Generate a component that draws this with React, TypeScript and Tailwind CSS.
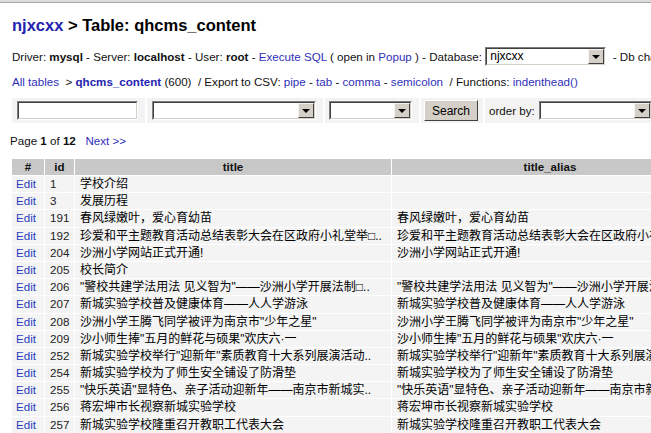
import React from "react";

const rows: [string, string, string][] = [
  ["1", "学校介绍", ""],
  ["3", "发展历程", ""],
  ["191", "春风绿嫩叶，爱心育幼苗", "春风绿嫩叶，爱心育幼苗"],
  ["192", "珍爱和平主题教育活动总结表彰大会在区政府小礼堂举□..", "珍爱和平主题教育活动总结表彰大会在区政府小礼堂举行"],
  ["204", "沙洲小学网站正式开通!", "沙洲小学网站正式开通!"],
  ["205", "校长简介", ""],
  ["206", "\"警校共建学法用法 见义智为\"——沙洲小学开展法制□..", "\"警校共建学法用法 见义智为\"——沙洲小学开展法制教育活动"],
  ["207", "新城实验学校普及健康体育——人人学游泳", "新城实验学校普及健康体育——人人学游泳"],
  ["208", "沙洲小学王腾飞同学被评为南京市\"少年之星\"", "沙洲小学王腾飞同学被评为南京市\"少年之星\""],
  ["209", "沙小师生捧\"五月的鲜花与硕果\"欢庆六·一", "沙小师生捧\"五月的鲜花与硕果\"欢庆六·一"],
  ["252", "新城实验学校举行\"迎新年\"素质教育十大系列展演活动..", "新城实验学校举行\"迎新年\"素质教育十大系列展演活动"],
  ["254", "新城实验学校为了师生安全铺设了防滑垫", "新城实验学校为了师生安全铺设了防滑垫"],
  ["255", "\"快乐英语\"显特色、亲子活动迎新年——南京市新城实..", "\"快乐英语\"显特色、亲子活动迎新年——南京市新城实验学校"],
  ["256", "蒋宏坤市长视察新城实验学校", "蒋宏坤市长视察新城实验学校"],
  ["257", "新城实验学校隆重召开教职工代表大会", "新城实验学校隆重召开教职工代表大会"],
];

function Arrow() {
  return (
    <div className="h-full w-[16px] shrink-0 bg-[#d4d0c8] border border-t-[#f4f4f4] border-l-[#f4f4f4] border-b-[#404040] border-r-[#404040] flex items-center justify-center">
      <div className="w-0 h-0 border-l-[4px] border-r-[4px] border-t-[4px] border-l-transparent border-r-transparent border-t-black" />
    </div>
  );
}

function Select({ w, value = "" }: { w: string; value?: string }) {
  return (
    <div className={`${w} h-[19px] shrink-0 border border-t-[#808080] border-l-[#808080] border-b-white border-r-white`}>
      <div className="h-full border border-t-[#404040] border-l-[#404040] border-b-[#d4d0c8] border-r-[#d4d0c8] bg-white flex items-stretch">
        <div className="flex-1 pl-[3px] leading-[15px] text-[12px] text-black overflow-hidden">{value}</div>
        <Arrow />
      </div>
    </div>
  );
}

function Input({ w }: { w: string }) {
  return (
    <div className={`${w} h-[19px] shrink-0 border border-t-[#808080] border-l-[#808080] border-b-white border-r-white`}>
      <div className="h-full border border-t-[#404040] border-l-[#404040] border-b-[#d4d0c8] border-r-[#d4d0c8] bg-white" />
    </div>
  );
}

export default function App() {
  return (
    <div className="w-[651px] h-[433px] overflow-hidden bg-white whitespace-nowrap font-['Liberation_Sans','Noto_Sans_CJK_SC',sans-serif] text-[11.6px] text-[#111]">
      <div className="h-[2px] bg-[#dcdcdc]" />
      <div className="h-[1px] bg-[#a8a8a8]" />

      <div className="mt-[12px] pl-[12px] h-[20px] leading-[20px] text-[16.5px] font-bold text-black">
        <span className="text-[#2323b0]">njxcxx</span> &gt; Table: qhcms_content
      </div>

      <div className="mt-[12px] pl-[12px] h-[19px] flex items-center">
        <span className="shrink-0">
          Driver: <b>mysql</b> - Server: <b>localhost</b> - User: <b>root</b> -{" "}
          <span className="text-[#3030b8]">Execute SQL</span> ( open in{" "}
          <span className="text-[#3030b8]">Popup</span> ) - Database:&nbsp;
        </span>
        <Select w="w-[121px]" value="njxcxx" />
        <span className="shrink-0">&nbsp;&nbsp;- Db charset: utf8</span>
      </div>

      <div className="mt-[8px] pl-[12px] h-[16px] leading-[16px]">
        <span className="text-[#3030b8]">All tables</span> &nbsp;&gt;{" "}
        <b className="text-[#2323b0]">qhcms_content</b> (600) &nbsp;/ Export to CSV:{" "}
        <span className="text-[#3030b8]">pipe</span> - <span className="text-[#3030b8]">tab</span> -{" "}
        <span className="text-[#3030b8]">comma</span> - <span className="text-[#3030b8]">semicolon</span> &nbsp;/ Functions:{" "}
        <span className="text-[#3030b8]">indenthead()</span>
      </div>

      <div className="mt-[8px] ml-[12px] flex gap-[2px] h-[25px]">
        <div className="w-[133px] shrink-0 bg-[#f3f3f3] pl-[5px] pt-[3px]">
          <Input w="w-[121px]" />
        </div>
        <div className="w-[176px] shrink-0 bg-[#f3f3f3] pl-[5px] pt-[3px]">
          <Select w="w-[164px]" />
        </div>
        <div className="w-[94px] shrink-0 bg-[#f3f3f3] pl-[4px] pt-[3px]">
          <Select w="w-[83px]" />
        </div>
        <div className="w-[62px] shrink-0 bg-[#f3f3f3] pl-[3px] pt-[2px]">
          <div className="w-[54px] h-[21px] bg-[#d4d0c8] border border-t-white border-l-white border-b-[#404040] border-r-[#404040] flex items-center justify-center text-[12px] text-black">
            Search
          </div>
        </div>
        <div className="w-[200px] shrink-0 bg-[#f3f3f3] pl-[4px] pt-[3px] flex items-start">
          <span className="leading-[19px] mr-[4px]">order by:</span>
          <Select w="w-[113px]" />
        </div>
      </div>

      <div className="mt-[10px] pl-[10px] h-[16px] leading-[16px]">
        Page <b>1</b> of <b>12</b>&nbsp;&nbsp; <span className="text-[#3030b8]">Next &gt;&gt;</span>
      </div>

      <div className="mt-[10px] ml-[12px] grid grid-cols-[32px_29px_316px_316px] gap-[1px]">
        <div className="h-[16px] bg-[#c8c8c8] font-bold text-center leading-[16px]">#</div>
        <div className="h-[16px] bg-[#c8c8c8] font-bold text-center leading-[16px]">id</div>
        <div className="h-[16px] bg-[#c8c8c8] font-bold text-center leading-[16px]">title</div>
        <div className="h-[16px] bg-[#c8c8c8] font-bold text-center leading-[16px]">title_alias</div>
        {rows.map(([id, t, a]) => (
          <React.Fragment key={id}>
            <div className="h-[16.2px] bg-[#f4f4f4] pl-[4px] leading-[16px] text-[#2a3dc0]">Edit</div>
            <div className="h-[16.2px] bg-[#f4f4f4] pl-[5px] leading-[16px] text-[#222]">{id}</div>
            <div className="h-[16.2px] bg-[#f4f4f4] pl-[5px] leading-[16px] text-[12px] text-black overflow-hidden">{t}</div>
            <div className="h-[16.2px] bg-[#f4f4f4] pl-[5px] leading-[16px] text-[12px] text-black overflow-hidden">{a}</div>
          </React.Fragment>
        ))}
      </div>
    </div>
  );
}
